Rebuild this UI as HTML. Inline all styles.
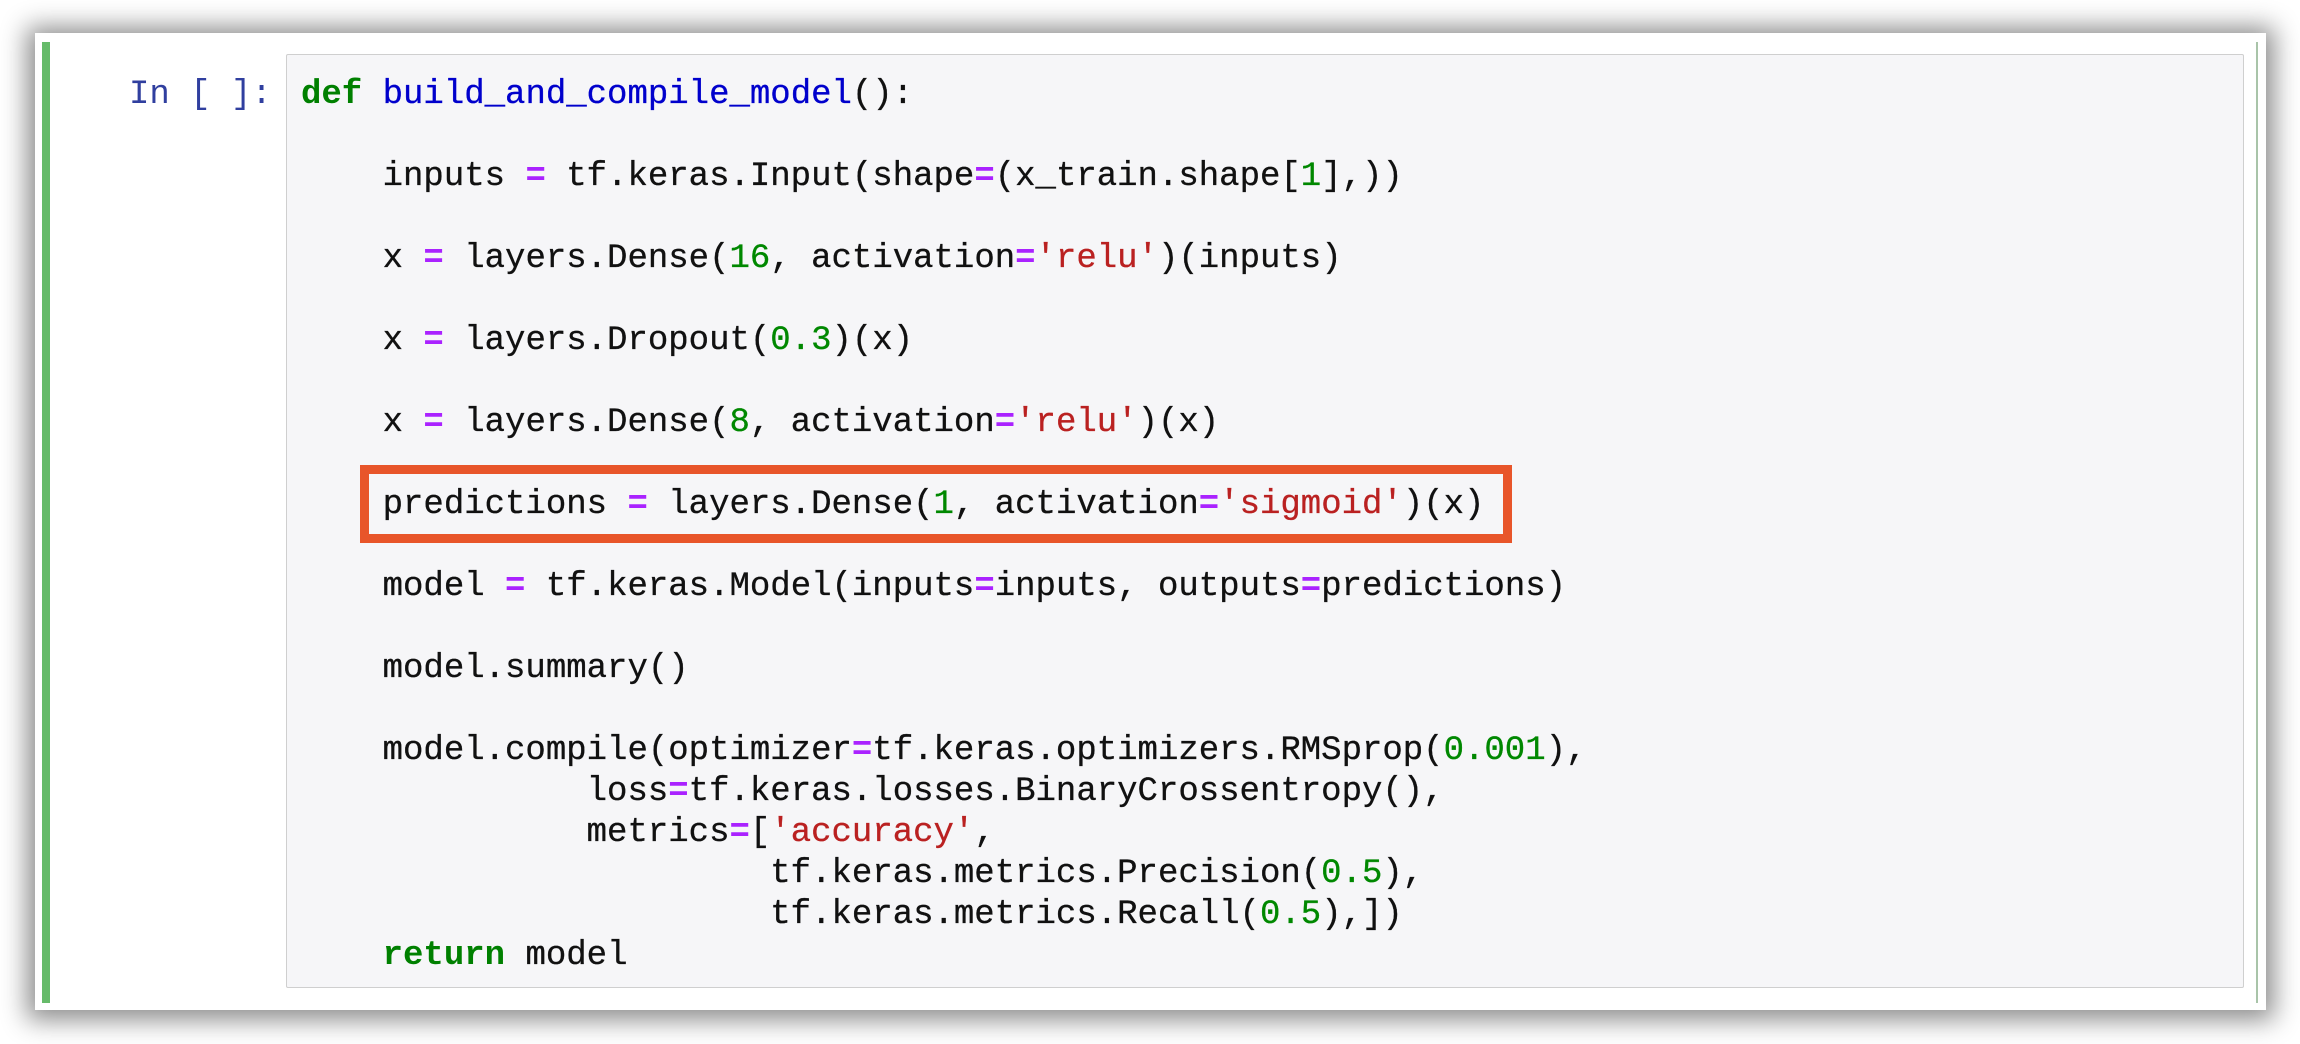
<!DOCTYPE html>
<html><head><meta charset="utf-8"><style>
html,body{margin:0;padding:0;width:2300px;height:1044px;background:#fff;overflow:hidden}
.panel{position:absolute;left:35px;top:33px;width:2231px;height:977px;background:#fff;box-shadow:0 2px 24px 8px rgba(0,0,0,0.45)}
.bar{position:absolute;left:42px;top:42px;width:8px;height:961px;background:#66bb6a}
.rline{position:absolute;left:2256px;top:42px;width:2px;height:961px;background:#a9c4a9}
.box{position:absolute;left:286px;top:54px;width:1956px;height:932px;background:#f6f6f8;border:1px solid #cfcfcf;border-radius:2px}
.code{position:absolute;left:301px;top:75px;margin:0;font-family:"Liberation Mono",monospace;font-size:34px;line-height:41px;color:#111;white-space:pre;-webkit-text-stroke:0.3px #111}
.prompt{position:absolute;left:129px;top:75px;font-family:"Liberation Mono",monospace;font-size:34px;line-height:41px;color:#303f9f;white-space:pre}
.k{color:#008000;font-weight:bold;-webkit-text-stroke:0}
.f{color:#0000cc;-webkit-text-stroke:0.3px #0000cc}
.o{color:#aa22ff;font-weight:bold;-webkit-text-stroke:0}
.n{color:#008800;-webkit-text-stroke:0.3px #080}
.s{color:#ba2121;-webkit-text-stroke:0.3px #ba2121}
.red{position:absolute;left:360px;top:465px;width:1134px;height:60px;border:9px solid #e8552a}
</style></head><body>
<div class="panel"></div>
<div class="bar"></div>
<div class="rline"></div>
<div class="box"></div>
<div class="prompt">In [ ]:</div>
<pre class="code"><span class="k">def</span> <span class="f">build_and_compile_model</span>():

    inputs <span class="o">=</span> tf.keras.Input(shape<span class="o">=</span>(x_train.shape[<span class="n">1</span>],))

    x <span class="o">=</span> layers.Dense(<span class="n">16</span>, activation<span class="o">=</span><span class="s">'relu'</span>)(inputs)

    x <span class="o">=</span> layers.Dropout(<span class="n">0.3</span>)(x)

    x <span class="o">=</span> layers.Dense(<span class="n">8</span>, activation<span class="o">=</span><span class="s">'relu'</span>)(x)

    predictions <span class="o">=</span> layers.Dense(<span class="n">1</span>, activation<span class="o">=</span><span class="s">'sigmoid'</span>)(x)

    model <span class="o">=</span> tf.keras.Model(inputs<span class="o">=</span>inputs, outputs<span class="o">=</span>predictions)

    model.summary()

    model.compile(optimizer<span class="o">=</span>tf.keras.optimizers.RMSprop(<span class="n">0.001</span>),
              loss<span class="o">=</span>tf.keras.losses.BinaryCrossentropy(),
              metrics<span class="o">=</span>[<span class="s">'accuracy'</span>,
                       tf.keras.metrics.Precision(<span class="n">0.5</span>),
                       tf.keras.metrics.Recall(<span class="n">0.5</span>),])
    <span class="k">return</span> model</pre>
<div class="red"></div>
</body></html>
